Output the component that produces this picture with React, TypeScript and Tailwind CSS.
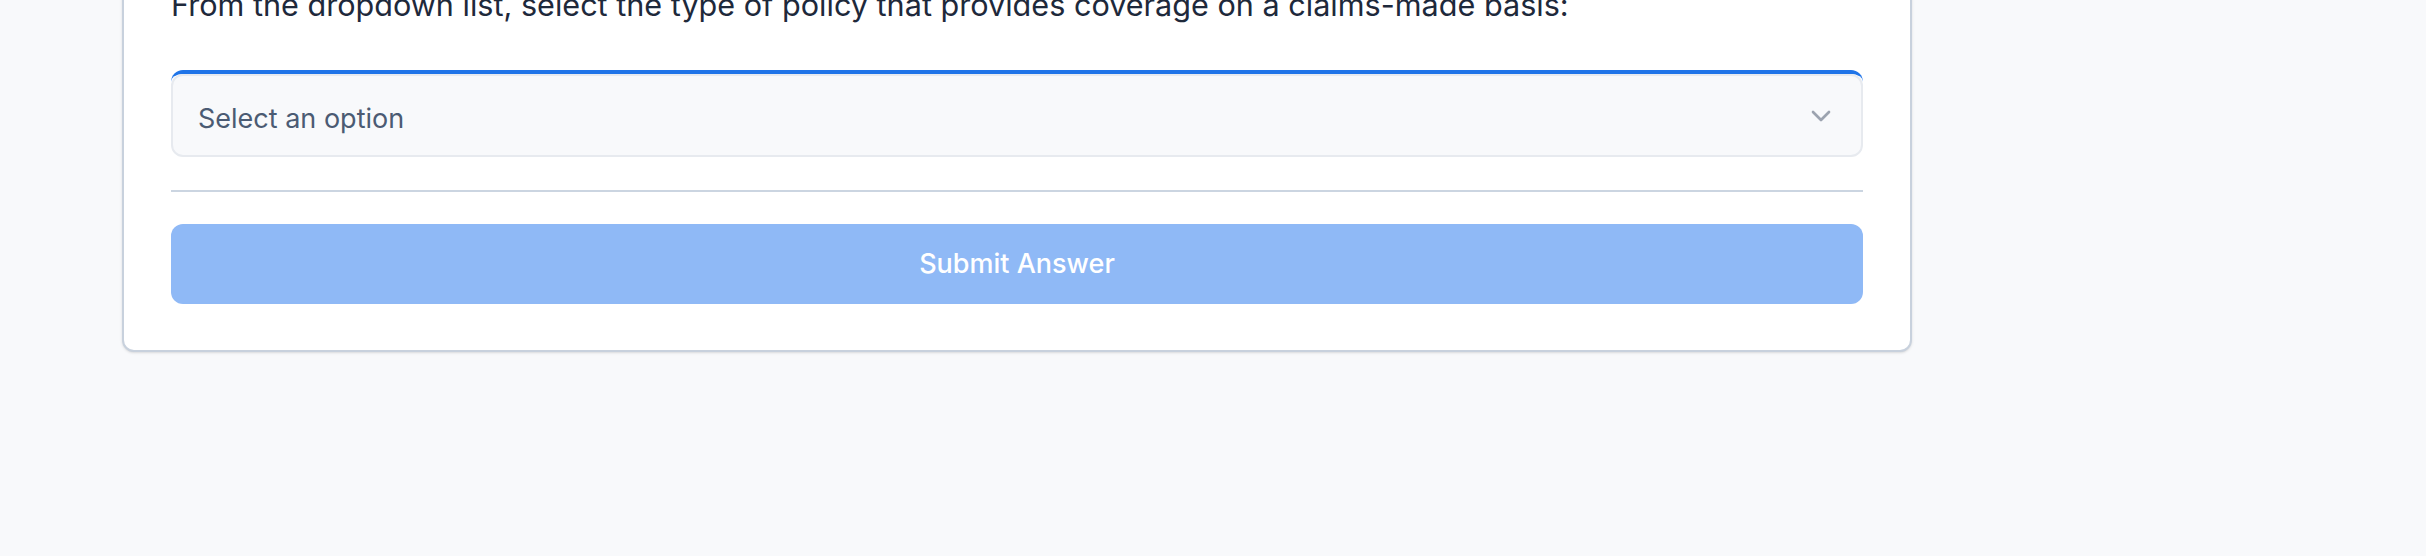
import { ChevronDown } from 'lucide-react'

export default function App() {
  return (
    <div
      className="h-[556px] w-full overflow-hidden bg-[#f8f9fb]"
      style={{ fontFamily: 'Inter, "Noto Sans", sans-serif' }}
    >
      <div className="-mt-[50px] ml-[122px] w-[1790px] rounded-xl border-2 border-[#c8d1dd] bg-white px-[47px] pt-[33px] pb-[46px] shadow-sm">
        <p className="mb-[45px] text-[30.6px] leading-[40px] text-[#1e293b]">
          From the dropdown list, select the type of policy that provides coverage on a claims-made basis:
        </p>

        <div className="relative rounded-xl border-t-4 border-[#1f74e8]">
          <select
            defaultValue=""
            className="block h-[83px] w-full appearance-none rounded-xl border-2 border-[#e7eaef] bg-[#f8f9fb] pt-[8px] pl-[25px] pr-16 text-[27px] text-[#4b5b73] outline-none"
          >
            <option value="" disabled>
              Select an option
            </option>
            <option value="claims-made">Claims-made policy</option>
            <option value="occurrence">Occurrence policy</option>
          </select>
          <ChevronDown
            size={32}
            strokeWidth={2}
            className="pointer-events-none absolute right-[26px] top-1/2 -translate-y-1/2 text-[#9ca3af]"
          />
        </div>

        <div className="mt-[33px] mb-[32px] h-[2px] bg-[#cbd5e1]" />

        <button
          disabled
          className="flex h-[80px] w-full items-center justify-center rounded-xl bg-[#8fb9f6] text-[27px] font-medium text-white"
        >
          Submit Answer
        </button>
      </div>
    </div>
  )
}
